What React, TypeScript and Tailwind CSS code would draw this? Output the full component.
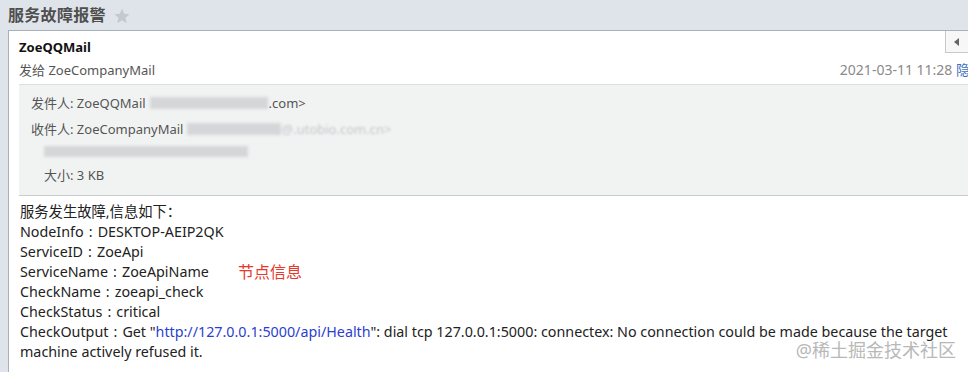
import React from "react";

const font = { fontFamily: '"Segoe UI", "Noto Sans", "Noto Sans CJK SC", sans-serif' };

function Blur({ w, h = 12, className = "" }: { w: number; h?: number; className?: string }) {
  return (
    <span
      className={"inline-block align-middle bg-[#d4d6d8] blur-[1.5px] " + className}
      style={{ width: w, height: h }}
    />
  );
}

function C() {
  return <span className="inline-block w-[14px] text-center">:</span>;
}

export default function App() {
  return (
    <div className="w-[968px] h-[372px] overflow-hidden bg-[#dfe4ea] flex flex-col" style={font}>
      <div className="h-[30px] flex items-center pl-[8px] gap-[7px]">
        <span className="text-[16px] text-[#4f4f4f] font-semibold tracking-[0.3px]">服务故障报警</span>
        <svg width="18" height="18" viewBox="0 0 24 24" className="mt-[1px]">
          <path d="M12 2l2.9 6.9 7.1.6-5.4 4.7 1.7 7.3L12 17.6 5.7 21.5l1.7-7.3L2 9.5l7.1-.6z" fill="#c3c9cf" />
        </svg>
      </div>
      <div className="ml-[8px] flex-1 bg-white border-l border-t border-[#a9b0b8] relative overflow-hidden">
        <div className="absolute right-0 top-0 w-[23px] h-[22px] bg-[#f7f7f7] border-l border-b border-[#c8c8c8] flex items-center justify-center">
          <svg width="8" height="10" viewBox="0 0 8 10"><path d="M6 1L1 5l5 4z" fill="#666" /></svg>
        </div>
        <div className="pl-[10px] pt-[6px]">
          <div className="text-[13px] font-bold text-[#111] leading-[20px]">ZoeQQMail</div>
          <div className="flex justify-between items-center text-[13px] leading-[20px] mt-[3px]">
            <span className="text-[#555]">发给 ZoeCompanyMail</span>
            <span className="text-[14px] text-[#8a8a8a] mr-[-2px] whitespace-nowrap">2021-03-11 11:28 <span className="text-[#3b6fc0]">隐</span></span>
          </div>
        </div>
        <div className="ml-[10px] mt-[4px] h-[112px] bg-[#f1f3f3] border-t border-b border-[#dcdfdf] border-b-[#c9cccc] pl-[12px] pt-[9px] text-[13px] text-[#555] leading-[18px]">
          <div className="flex items-center">发件人: ZoeQQMail<Blur w={118} className="ml-[4px] mr-[1px]" />.com&gt;</div>
          <div className="flex items-center mt-[8px]">收件人: ZoeCompanyMail<Blur w={94} className="ml-[4px]" /><span className="text-[#c4c6c8] blur-[0.8px]">@.utobio.com.cn&gt;</span></div>
          <div className="flex items-center mt-[8px] pl-[13px]"><Blur w={204} h={11} className="bg-[#c9cbcd]" /></div>
          <div className="mt-[9px] pl-[13px]">大小: 3 KB</div>
        </div>
        <div className="pl-[11px] pt-[6px] text-[14.3px] leading-[20px] text-[#222]">
          <div>服务发生故障,信息如下：</div>
          <div>NodeInfo<C />DESKTOP-AEIP2QK</div>
          <div>ServiceID<C />ZoeApi</div>
          <div className="flex items-center">
            <span className="w-[218px]">ServiceName<C />ZoeApiName</span>
            <span className="text-[16px] text-[#e8382c] leading-[20px]">节点信息</span>
          </div>
          <div>CheckName<C />zoeapi_check</div>
          <div>CheckStatus<C />critical</div>
          <div className="pr-[12px]">
            CheckOutput<C />Get "<span className="text-[#2b3fcf]">http://127.0.0.1:5000/api/Health</span>": dial tcp 127.0.0.1:5000: connectex: No connection could be made because the target machine actively refused it.
          </div>
        </div>
        <div className="absolute right-[12px] bottom-[13px] text-[18px] text-[#b8b8b8] leading-none">@稀土掘金技术社区</div>
      </div>
    </div>
  );
}
